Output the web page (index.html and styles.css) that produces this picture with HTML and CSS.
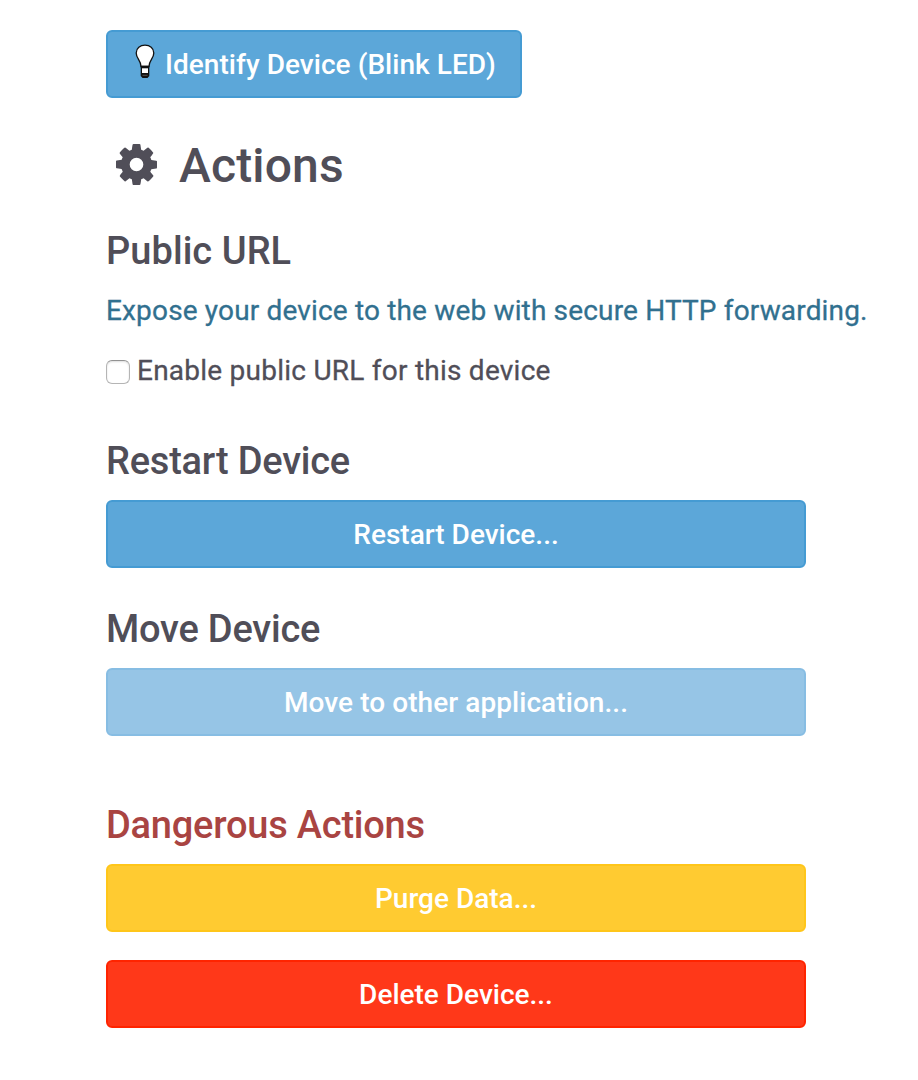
FILE: index.html
```html
<!DOCTYPE html>
<html lang="en">
<head>
<meta charset="utf-8">
<title>Device actions</title>
<link rel="stylesheet" href="styles.css">
</head>
<body>
<main class="page">
  <button class="btn btn-identify"><svg class="bulb" viewBox="0 0 22 36"><path d="M7 23.500C7 17.500 2.200 15.500 2.200 10C2.200 5 6.200 2.200 11 2.200S19.800 5 19.800 10C19.800 15.500 15 17.500 15 23.500Z" fill="#fff" stroke="#111" stroke-width="1.300"/><path d="M6.700 22.800h8.600v10.200l-1.800 2h-5l-1.800-2z" fill="#111"/><path d="M8 25.300h6v4.700H8z" fill="#fff"/><path d="M8.500 32.300h5" stroke="#555" stroke-width="1"/></svg><span class="label">Identify Device (Blink LED)</span></button>
  <h1 class="title"><svg class="gear" viewBox="0 0 1536 1536"><path fill="currentColor" fill-rule="evenodd" d="M1024 768q0-106-75-181t-181-75-181 75-75 181 75 181 181 75 181-75 75-181zm512-109v222q0 12-8 23t-20 13l-185 28q-19 54-39 91 35 50 107 138 10 12 10 25t-9 23q-27 37-99 108t-94 71q-12 0-26-9l-138-108q-44 23-91 38-16 136-29 186-7 28-36 28H657q-14 0-24.500-8.500T621 1506l-28-184q-49-16-90-37l-141 107q-10 9-25 9-14 0-25-11-126-114-165-168-7-10-7-23 0-12 8-23 15-21 51-66.500t54-70.500q-27-50-41-99L29 913q-13-2-21-12.500T0 877V655q0-12 8-23t19-13l186-28q14-46 39-92-40-57-107-138-10-12-10-24 0-10 9-23 26-36 98.500-107.500T337 135q13 0 26 10l138 107q44-23 91-38 16-136 29-186 7-28 36-28h222q14 0 24.500 8.500T915 30l28 184q49 16 90 37l142-107q9-9 24-9 13 0 25 10 129 119 165 170 7 8 7 22 0 12-8 23-15 21-51 66.500t-54 70.500q26 50 41 98l183 28q13 2 21 12.500t8 23.500z"/></svg><span class="label">Actions</span></h1>
  <h2 class="heading url-heading"><span class="label">Public URL</span></h2>
  <p class="hint"><span class="label">Expose your device to the web with secure HTTP forwarding.</span></p>
  <label class="check"><input class="box" type="checkbox"><span class="label">Enable public URL for this device</span></label>
  <h2 class="heading restart-heading"><span class="label">Restart Device</span></h2>
  <button class="btn btn-block"><span class="label">Restart Device...</span></button>
  <h2 class="heading move-heading"><span class="label">Move Device</span></h2>
  <button class="btn btn-block btn-muted"><span class="label">Move to other application...</span></button>
  <h2 class="heading danger-heading"><span class="label">Dangerous Actions</span></h2>
  <button class="btn btn-block btn-warning"><span class="label">Purge Data...</span></button>
  <button class="btn btn-block btn-danger"><span class="label">Delete Device...</span></button>
</main>
</body>
</html>
```
FILE: styles.css
```css
* { box-sizing: border-box; }
body { margin: 0; background: #fff; color: #504e58; font-family: Roboto, sans-serif; font-size: 28px; }
.page { display: flex; flex-direction: column; align-items: flex-start; height: 1080px; padding: 30px 0 0 106px; }
.label { white-space: nowrap; }
.btn { display: flex; align-items: center; justify-content: center; height: 68px; padding: 2px 0 0; border: 2px solid #459bd3; border-radius: 6px; background: #5ca7d9; color: #fff; font: 500 28px/40px Roboto, sans-serif; }
.btn-identify { width: 416px; justify-content: flex-start; padding-left: 25px; letter-spacing: 0.04px; }
.bulb { width: 22px; height: 36px; margin: -9px 10px 0 1px; }
.bulb + .label { margin-left: -1px; }
.btn-block { width: 700px; }
.btn-muted { background: #96c5e6; border-color: #87bde3; letter-spacing: 0.07px; }
.btn-warning { background: #ffcb31; border-color: #ffc61a; }
.btn-danger { margin-top: 28px; background: #ff3819; border-color: #ff2400; }
.title { display: flex; align-items: center; height: 60px; margin: 37px 0 0; padding-left: 10px; font-size: 48px; font-weight: 500; }
.gear { width: 41px; height: 41px; margin: -1px 22px 0 0; }
.title .label { letter-spacing: 0.15px; }
.heading { display: flex; align-items: center; height: 42px; margin: 0; font-size: 38px; font-weight: 500; letter-spacing: -0.22px; }
.url-heading { margin-top: 35px; letter-spacing: 0.05px; }
.hint { height: 40px; margin: 19px 0 0; line-height: 40px; color: #31708f; }
.hint .label { letter-spacing: 0.16px; -webkit-text-stroke: 0.3px currentColor; }
.check { display: flex; align-items: center; height: 40px; margin-top: 19px; }
.check .label { letter-spacing: 0.24px; -webkit-text-stroke: 0.3px currentColor; }
.box { appearance: none; width: 24px; height: 24px; margin: 3px 7px 0 0; border: 1px solid #b5b5b5; border-top-color: #929292; border-radius: 6px; background: #fff; box-shadow: inset 0 1px 2px #ddd; }
.restart-heading { margin: 50px 0 18px; }
.move-heading { margin: 40px 0 18px; }
.danger-heading { margin: 68px 0 18px; color: #a94442; }
```
